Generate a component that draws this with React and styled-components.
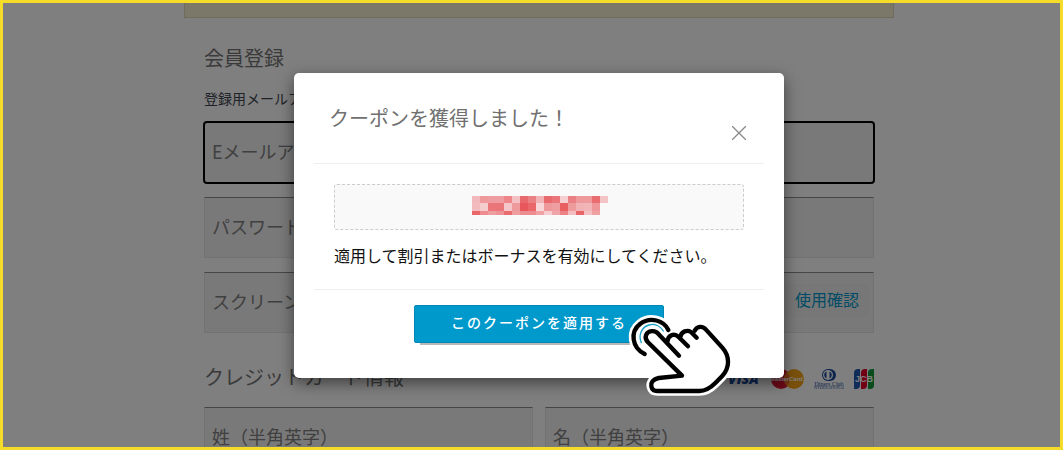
import React from "react";
import styled, { createGlobalStyle, css } from "styled-components";

const GlobalStyle = createGlobalStyle`
  * { box-sizing: border-box; }
  body {
    margin: 0;
    background: #fff;
    font-family: "Noto Sans CJK JP", "Noto Sans", sans-serif;
    font-weight: 400;
  }
  h1, h2, p { margin: 0; font-weight: 400; }
  input, button { font-family: inherit; font-weight: inherit; }
`;

const Frame = styled.div`
  position: relative;
  height: 100vh;
  overflow: hidden;
  border: 3px solid #f5dc28;
  padding-left: 15px;
`;

const Page = styled.main`
  max-width: 710px;
  margin: 0 auto;
`;

const Notice = styled.div`
  height: 15px;
  background: #f6eed2;
  border: 1px solid #e0d9b8;
  border-top: 0;
`;

const Form = styled.form`
  display: flex;
  flex-direction: column;
  padding: 25px 20px 0;
`;

const Heading = styled.h2`
  font-size: 20px;
  line-height: 30px;
  color: #747474;
`;

const Label = styled.label`
  margin: 15px 0 14px;
  font-size: 14px;
  line-height: 20px;
  color: #3c4450;
`;

const fieldBox = css`
  height: 61px;
  background: #f2f2f2;
  border: 1px solid #e4e4e4;
  border-top: 1px solid #8c8c8c;
`;

const Input = styled.input`
  ${(p) => !p.$bare && fieldBox}
  ${(p) => p.$bare && css`border: 0; background: transparent; align-self: stretch;`}
  width: 100%;
  min-width: 0;
  padding: 0 7px 3px;
  font-size: 18px;
  color: #333;
  outline: 0;
  &::placeholder { color: #808080; opacity: 1; }
  ${(p) => p.$active && css`
    border: 0;
    border-radius: 3px;
    padding: 0 8px 3px;
    outline: 2px solid #000;
    outline-offset: -1px;
  `}
`;

const Stack = styled.div`
  display: flex;
  flex-direction: column;
  gap: 14px;
`;

const CheckField = styled.div`
  ${fieldBox}
  display: flex;
  align-items: center;
  padding-right: 4px;
`;

const CheckButton = styled.button`
  flex: none;
  height: 33px;
  padding: 0 10px 4px;
  margin-bottom: 4px;
  border: 0;
  background: #eee;
  color: #09c;
  font-size: 16px;
`;

const CardHeading = styled.div`
  display: flex;
  justify-content: space-between;
  align-items: center;
  margin: 29px 0 15px;
`;

const Cards = styled.div`
  display: flex;
  gap: 10px;
  padding-top: 4px;
`;

const NameRow = styled.div`
  display: grid;
  grid-template-columns: 1fr 1fr;
  gap: 12px;
`;

const Overlay = styled.div`
  position: absolute;
  inset: 0;
  padding: 70px 0 0 15px;
  background: rgba(0, 0, 0, 0.5);
`;

const Dialog = styled.section`
  position: relative;
  max-width: 490px;
  margin: 0 auto;
  padding: 0 20px;
  background: #fff;
  border-radius: 5px;
  box-shadow: 0 5px 15px rgba(0, 0, 0, 0.5);
`;

const DialogHeader = styled.header`
  display: flex;
  justify-content: space-between;
  align-items: flex-start;
  padding: 30px 15px 20px;
  border-bottom: 1px solid #eee;
`;

const DialogTitle = styled.h1`
  font-size: 20px;
  line-height: 30px;
  color: #707070;
`;

const Close = styled.button`
  display: flex;
  margin-top: 20px;
  padding: 3px;
  border: 0;
  background: none;
`;

const DialogBody = styled.div`
  padding: 20px 20px 22px;
  border-bottom: 1px solid #eee;
`;

const Coupon = styled.div`
  display: flex;
  justify-content: center;
  height: 46px;
  padding: 11px 0 0 2px;
  background: #f9f9f9;
  border: 1px dashed #ccc;
  border-radius: 3px;
`;

const Message = styled.p`
  margin-top: 13px;
  font-size: 16px;
  line-height: 24px;
  color: #111;
`;

const DialogFooter = styled.footer`
  display: flex;
  justify-content: center;
  padding: 15px 0 35px;
`;

const Apply = styled.button`
  width: 250px;
  height: 38px;
  padding: 0 0 4px;
  border: 1px solid #0088b5;
  border-radius: 2px;
  background: #09c;
  box-shadow: 0 8px 0 -6px #b8b8b8;
  color: #fff;
  font-size: 14px;
  font-weight: 500;
  letter-spacing: 2px;
`;

const Pointer = styled.svg`
  position: absolute;
  left: 326px;
  top: 232px;
  pointer-events: none;
`;

const MOSAIC = [
  { y: 0, h: 7, cells: ["#f2b9bc", "#ee9a9d", "#ee9c9f", "#ee9c9f", "#ed8589", "#f4c0c3", "#e8696c", "#eb8084", "#f2b3b6", "#e96a6d", "#ea7679", "#f6cfd1", "#eb8084", "#ee9a9d", "#ee9a9d", "#e96c6f", "#f4c3c6"] },
  { y: 7, h: 8, cells: ["#f3bbbe", "#f5ccce", "#ea7679", "#ea7578", "#f4c6c9", "#ee999c", "#e8575b", "#e96669", "#f7d7d9", "#ee989b", "#ee9da1", "#e85e61", "#ee9b9e", "#f1b2b5", "#f1b5b8", "#ee9699"] },
  { y: 15, h: 4, cells: ["#e96669", "#ed8b8f", "#ee9da0", "#ed9396", "#e96c70", "#ee9da0", "#ed8c90", "#ed8c90", "#efa1a4", "#f6cdd0", "#efa4a7", "#ec8286", "#f3bcbf", "#e8656a", "#f3c0c3", "#efa0a3"] },
];

const Mosaic = () => (
  <svg width="136" height="19" shapeRendering="crispEdges" aria-label="クーポンコード">
    {MOSAIC.map((row) =>
      row.cells.map((fill, i) => (
        <rect key={`${row.y}-${i}`} x={i * 8} y={row.y} width="8" height={row.h} fill={fill} />
      ))
    )}
  </svg>
);

const HAND =
  "M177 152 L116 88 C106 74 83 76 78 91 C75 99 78 106 84 112 L186 212 L116 219 C99 222 92 233 94 244 C96 254 102 258 112 258 L238 258 C260 258 273 247 286 234 L306 214 C330 188 330 154 307 128 L258 74 C248 62 231 63 224 77";

const Hand = () => (
  <Pointer width="120" height="100" viewBox="0 0 360 300" fill="none" strokeLinecap="round" strokeLinejoin="round" aria-hidden="true">
    <g stroke="#fff" strokeWidth="29">
      <path d="M74 147 C35 128 30 80 60 57 C90 34 132 46 145 75" />
      <path d={HAND} fill="#fff" />
      <path d="M143 110 C149 91 171 83 184 98 C188 82 207 73 222 86" />
    </g>
    <circle cx="97" cy="94" r="43" fill="#fff" />
    <path d="M64 113 C54 91 65 66 87 60 C105 55 121 64 130 78" stroke="#159fcb" strokeWidth="4" />
    <path d={HAND} fill="#fff" />
    <g stroke="#000" strokeWidth="13">
      <path d="M74 147 C35 128 30 80 60 57 C90 34 132 46 145 75" />
      <path d={HAND} />
      <path d="M142 110 C144 91 162 83 175 95 L204 124" />
      <path d="M181 96 C184 78 202 74 213 81 L230 98" />
    </g>
  </Pointer>
);

const Visa = () => (
  <svg width="34" height="20" viewBox="0 0 34 20" aria-label="VISA">
    <text x="1" y="15" fontFamily="Open Sans, sans-serif" fontSize="14" fontWeight="800" fontStyle="italic" fill="#1a4fa8">VISA</text>
  </svg>
);

const MasterCard = () => (
  <svg width="33" height="20" viewBox="0 0 33 20" aria-label="MasterCard">
    <circle cx="10" cy="10" r="10" fill="#dc1530" />
    <circle cx="23" cy="10" r="10" fill="#f5a318" />
    <path d="M16 3 A10 10 0 0 1 16 17 A10 10 0 0 1 16 3" fill="#e9692b" />
    <text x="16" y="12" textAnchor="middle" fontFamily="Liberation Sans, sans-serif" fontSize="6" fontWeight="700" fontStyle="italic" fill="#fff">MasterCard.</text>
  </svg>
);

const Diners = () => (
  <svg width="30" height="20" viewBox="0 0 30 20" aria-label="Diners Club International">
    <rect x="8" y="0" width="14" height="12" rx="6" fill="#1b4b9c" />
    <circle cx="14" cy="6" r="5" fill="#fff" />
    <path d="M12.5 2.5 A3.8 3.8 0 0 0 12.5 9.5 Z M15.5 2.5 A3.8 3.8 0 0 1 15.5 9.5 Z" fill="#1b4b9c" />
    <text x="15" y="17" textAnchor="middle" fontFamily="Liberation Serif, serif" fontSize="6" fill="#1b4b9c">Diners Club</text>
    <text x="15" y="20" textAnchor="middle" fontFamily="Liberation Serif, serif" fontSize="4" fill="#1b4b9c">INTERNATIONAL</text>
  </svg>
);

const Jcb = () => (
  <svg width="20" height="20" viewBox="0 0 20 20" aria-label="JCB">
    <path d="M0 4 Q0 0 4 0 H6 V16 Q6 20 2 20 H0 Z" fill="#2159b0" />
    <path d="M7 4 Q7 0 11 0 H13 V16 Q13 20 9 20 H7 Z" fill="#e4002b" />
    <path d="M14 4 Q14 0 18 0 H20 V16 Q20 20 16 20 H14 Z" fill="#12993b" />
    <text x="10" y="13" textAnchor="middle" fontFamily="Liberation Sans, sans-serif" fontSize="9" fontWeight="700" fill="#fff">JCB</text>
  </svg>
);

export default function App() {
  return (
    <>
      <GlobalStyle />
      <Frame>
        <Page>
          <Notice />
          <Form>
            <Heading>会員登録</Heading>
            <Label htmlFor="email">登録用メールアドレス</Label>
            <Stack>
              <Input id="email" type="email" placeholder="Eメールアドレス" $active />
              <Input type="password" placeholder="パスワード" aria-label="パスワード" />
              <CheckField>
                <Input $bare type="text" placeholder="スクリーンネーム" aria-label="スクリーンネーム" />
                <CheckButton type="button">使用確認</CheckButton>
              </CheckField>
            </Stack>
            <CardHeading>
              <Heading>クレジットカード情報</Heading>
              <Cards>
                <Visa />
                <MasterCard />
                <Diners />
                <Jcb />
              </Cards>
            </CardHeading>
            <NameRow>
              <Input type="text" placeholder="姓（半角英字）" aria-label="姓（半角英字）" />
              <Input type="text" placeholder="名（半角英字）" aria-label="名（半角英字）" />
            </NameRow>
          </Form>
        </Page>
        <Overlay>
          <Dialog role="dialog" aria-labelledby="coupon-title">
            <DialogHeader>
              <DialogTitle id="coupon-title">クーポンを獲得しました！</DialogTitle>
              <Close type="button" aria-label="閉じる">
                <svg width="14" height="14" viewBox="0 0 14 14" stroke="#888" strokeWidth="1.3">
                  <path d="M0 0 L14 14 M14 0 L0 14" />
                </svg>
              </Close>
            </DialogHeader>
            <DialogBody>
              <Coupon><Mosaic /></Coupon>
              <Message>適用して割引またはボーナスを有効にしてください。</Message>
            </DialogBody>
            <DialogFooter>
              <Apply type="button">このクーポンを適用する</Apply>
            </DialogFooter>
            <Hand />
          </Dialog>
        </Overlay>
      </Frame>
    </>
  );
}
